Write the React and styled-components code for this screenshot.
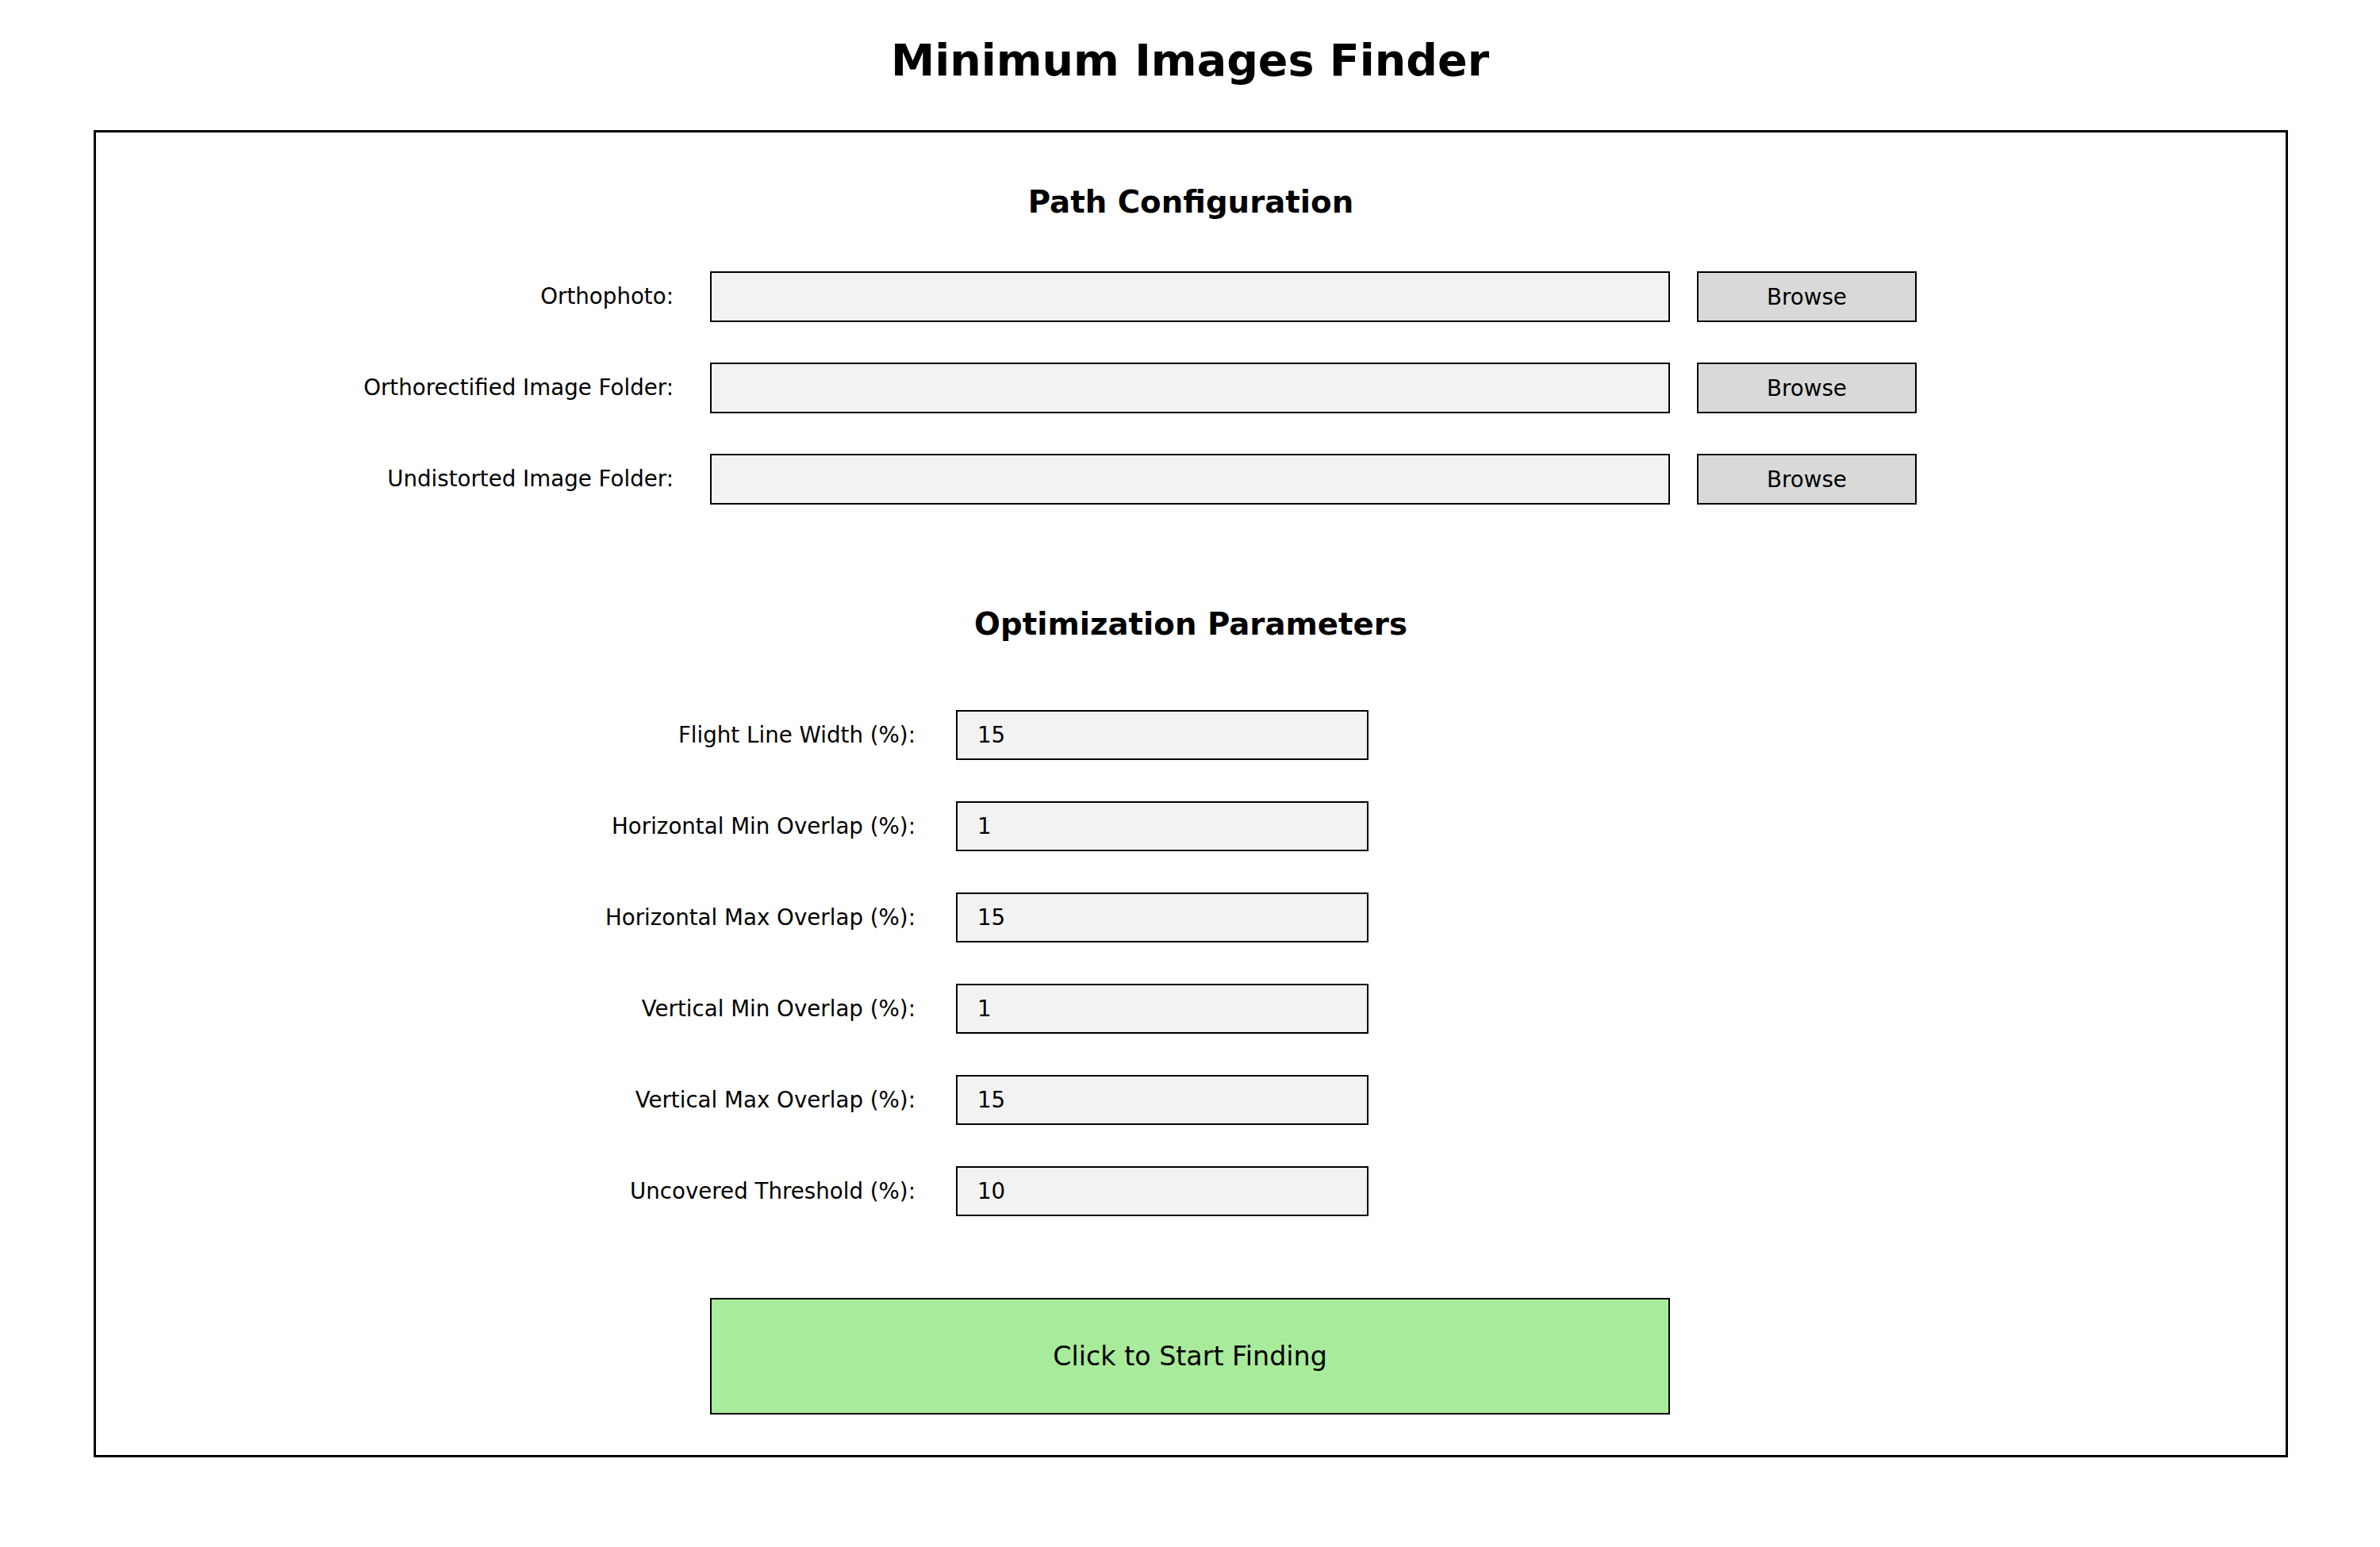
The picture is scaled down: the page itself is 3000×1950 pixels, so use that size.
import React from 'react';
import styled, { createGlobalStyle } from 'styled-components';

const GlobalStyle = createGlobalStyle`
  html, body {
    margin: 0;
    padding: 0;
    background: #ffffff;
  }
  body {
    font-family: "DejaVu Sans", "Liberation Sans", sans-serif;
    color: #000000;
  }
`;

const Page = styled.div`
  width: 3000px;
  height: 1950px;
  box-sizing: border-box;
  padding-top: 48px;
  display: flex;
  flex-direction: column;
  align-items: flex-start;
`;

const Title = styled.h1`
  align-self: stretch;
  margin: 0 0 60px;
  font-size: 55.5px;
  line-height: 56px;
  font-weight: bold;
  text-align: center;
`;

const Panel = styled.div`
  margin-left: 118px;
  width: 2766px;
  height: 1673px;
  box-sizing: border-box;
  border: 3px solid #000000;
  padding-top: 68px;
  display: flex;
  flex-direction: column;
`;

const SectionTitle = styled.h2`
  margin: 0 0 ${({ $gap }) => $gap}px 0;
  font-size: 38.7px;
  line-height: 39px;
  font-weight: bold;
  text-align: center;
`;

const FieldList = styled.div`
  display: flex;
  flex-direction: column;
  gap: ${({ $gap }) => $gap}px;
  margin-bottom: ${({ $after }) => $after}px;
`;

const Row = styled.div`
  display: flex;
  align-items: center;
  height: ${({ $height }) => $height}px;
`;

const Label = styled.label`
  flex: none;
  width: ${({ $width }) => $width}px;
  margin-right: ${({ $gap }) => $gap}px;
  text-align: right;
  font-size: 27.7px;
  line-height: 1;
`;

const TextBox = styled.input`
  flex: none;
  width: ${({ $width }) => $width}px;
  height: 100%;
  box-sizing: border-box;
  margin: 0;
  padding: 0 0 0 25px;
  border: 2px solid #000000;
  border-radius: 0;
  background: #f2f2f2;
  font-family: "DejaVu Sans", "Liberation Sans", sans-serif;
  font-size: 27.7px;
  color: #000000;
  outline: none;
`;

const BrowseButton = styled.button`
  flex: none;
  width: 277px;
  height: 100%;
  margin: 0 0 0 34px;
  padding: 0;
  box-sizing: border-box;
  border: 2px solid #000000;
  border-radius: 0;
  background: #d9d9d9;
  font-family: "DejaVu Sans", "Liberation Sans", sans-serif;
  font-size: 27.7px;
  color: #000000;
`;

const StartButton = styled.button`
  align-self: flex-start;
  margin: 0 0 0 774px;
  width: 1210px;
  height: 147px;
  padding: 0;
  box-sizing: border-box;
  border: 2px solid #000000;
  border-radius: 0;
  background: #a8eb9b;
  font-family: "DejaVu Sans", "Liberation Sans", sans-serif;
  font-size: 33.3px;
  color: #000000;
`;

const paths = [
  'Orthophoto:',
  'Orthorectified Image Folder:',
  'Undistorted Image Folder:',
];

const params = [
  { label: 'Flight Line Width (%):', value: '15' },
  { label: 'Horizontal Min Overlap (%):', value: '1' },
  { label: 'Horizontal Max Overlap (%):', value: '15' },
  { label: 'Vertical Min Overlap (%):', value: '1' },
  { label: 'Vertical Max Overlap (%):', value: '15' },
  { label: 'Uncovered Threshold (%):', value: '10' },
];

export default function App() {
  return (
    <Page>
      <GlobalStyle />
      <Title>Minimum Images Finder</Title>
      <Panel>
        <SectionTitle $gap={68}>Path Configuration</SectionTitle>
        <FieldList $gap={51} $after={131}>
          {paths.map((label) => (
            <Row key={label} $height={64}>
              <Label $width={728} $gap={46}>{label}</Label>
              <TextBox $width={1210} readOnly defaultValue="" />
              <BrowseButton>Browse</BrowseButton>
            </Row>
          ))}
        </FieldList>

        <SectionTitle $gap={89}>Optimization Parameters</SectionTitle>
        <FieldList $gap={52} $after={103}>
          {params.map((p) => (
            <Row key={p.label} $height={63}>
              <Label $width={1033} $gap={51}>{p.label}</Label>
              <TextBox $width={520} readOnly defaultValue={p.value} />
            </Row>
          ))}
        </FieldList>

        <StartButton>Click to Start Finding</StartButton>
      </Panel>
    </Page>
  );
}
